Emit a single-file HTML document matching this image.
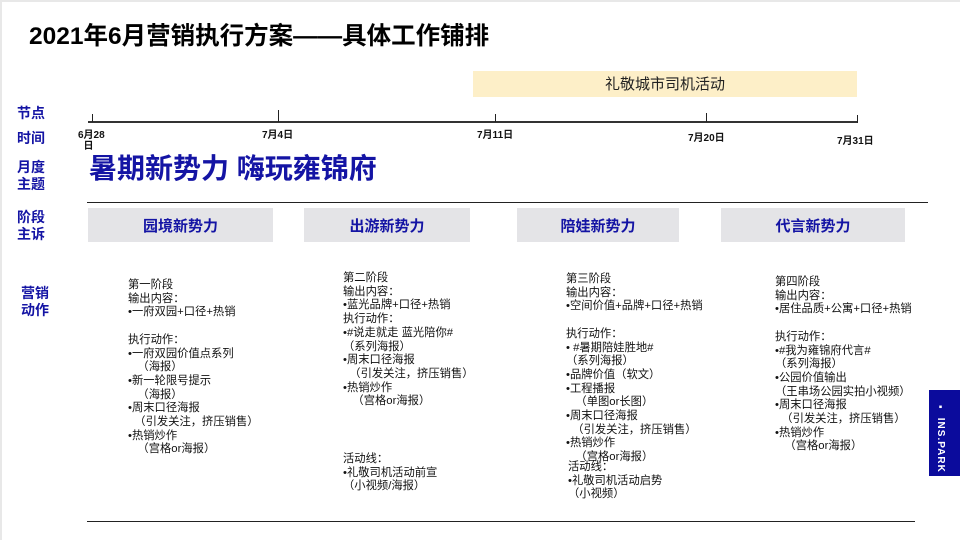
<!DOCTYPE html>
<html><head><meta charset="utf-8"><style>
*{margin:0;padding:0;box-sizing:border-box}
body{width:960px;height:540px;position:relative;background:#fff;font-family:"Liberation Sans","Noto Sans CJK SC",sans-serif;overflow:hidden}
.a{position:absolute;white-space:nowrap}
.lab{position:absolute;color:#1414a4;font-weight:bold;font-size:14px;line-height:17px;left:17px}
.d{position:absolute;font-size:10px;font-weight:bold;line-height:11px;color:#111}
.tk{position:absolute;width:1px;background:#222}
.box{position:absolute;top:208px;height:34px;background:#e4e4e7;color:#1414a4;font-weight:bold;font-size:15px;text-align:center;line-height:38px}
.t{position:absolute;font-size:11.3px;line-height:13.7px;color:#111;white-space:pre}
</style></head><body>
<div class="a" style="left:0;top:0;width:960px;height:2px;background:#e8e8e8"></div>
<div class="a" style="left:0;top:0;width:2px;height:540px;background:#e8e8e8"></div>
<div class="a" style="left:29px;top:17px;font-size:24.5px;font-weight:bold;color:#000">2021年6月营销执行方案——具体工作铺排</div>
<div class="a" style="left:473px;top:71px;width:384px;height:26px;background:#fdefc8;text-align:center;font-size:15px;line-height:27px;color:#222">礼敬城市司机活动</div>
<div class="lab" style="top:105px">节点</div>
<div class="lab" style="top:130px">时间</div>
<div class="lab" style="top:159px">月度<br>主题</div>
<div class="lab" style="top:209px">阶段<br>主诉</div>
<div class="lab" style="top:285px;left:21px">营销<br>动作</div>
<div class="a" style="left:88px;top:121px;width:769px;height:2px;background:#333"></div>
<div class="tk" style="left:92px;top:114px;height:8px"></div>
<div class="tk" style="left:278px;top:110px;height:12px"></div>
<div class="tk" style="left:495px;top:114px;height:8px"></div>
<div class="tk" style="left:706px;top:113px;height:9px"></div>
<div class="tk" style="left:857px;top:115px;height:8px"></div>
<div class="d" style="left:78px;top:130px">6月28<br>&nbsp;&nbsp;日</div>
<div class="d" style="left:262px;top:130px">7月4日</div>
<div class="d" style="left:477px;top:130px">7月11日</div>
<div class="d" style="left:688px;top:133px">7月20日</div>
<div class="d" style="left:837px;top:136px">7月31日</div>
<div class="a" style="left:89px;top:150px;font-size:28px;font-weight:bold;color:#1414a4;line-height:38px">暑期新势力 嗨玩雍锦府</div>
<div class="a" style="left:87px;top:202px;width:841px;height:1px;background:#222"></div>
<div class="box" style="left:88px;width:185px">园境新势力</div>
<div class="box" style="left:304px;width:166px">出游新势力</div>
<div class="box" style="left:517px;width:162px">陪娃新势力</div>
<div class="box" style="left:721px;width:184px">代言新势力</div>
<div class="t" style="left:128px;top:279px">第一阶段
输出内容：
•一府双园+口径+热销

执行动作：
•一府双园价值点系列
   （海报）
•新一轮限号提示
   （海报）
•周末口径海报
  （引发关注，挤压销售）
•热销炒作
   （宫格or海报）</div>
<div class="t" style="left:343px;top:272px">第二阶段
输出内容：
•蓝光品牌+口径+热销
执行动作：
•#说走就走 蓝光陪你#
（系列海报）
•周末口径海报
  （引发关注，挤压销售）
•热销炒作
   （宫格or海报）</div>
<div class="t" style="left:343px;top:453px">活动线：
•礼敬司机活动前宣
（小视频/海报）</div>
<div class="t" style="left:566px;top:273px">第三阶段
输出内容：
•空间价值+品牌+口径+热销

执行动作：
• #暑期陪娃胜地#
（系列海报）
•品牌价值（软文）
•工程播报
   （单图or长图）
•周末口径海报
  （引发关注，挤压销售）
•热销炒作
   （宫格or海报）</div>
<div class="t" style="left:568px;top:461px">活动线：
•礼敬司机活动启势
（小视频）</div>
<div class="t" style="left:775px;top:276px">第四阶段
输出内容：
•居住品质+公寓+口径+热销

执行动作：
•#我为雍锦府代言#
（系列海报）
•公园价值输出
（王串场公园实拍小视频）
•周末口径海报
  （引发关注，挤压销售）
•热销炒作
   （宫格or海报）</div>
<div class="a" style="left:87px;top:521px;width:828px;height:1px;background:#222"></div>
<div class="a" style="left:929px;top:390px;width:31px;height:86px;background:#0b0b9c"></div>
<div class="a" style="left:935px;top:402px;color:#fff;font-size:10px;font-weight:bold;writing-mode:vertical-rl;letter-spacing:1px">▪ INS.PARK</div>
</body></html>
